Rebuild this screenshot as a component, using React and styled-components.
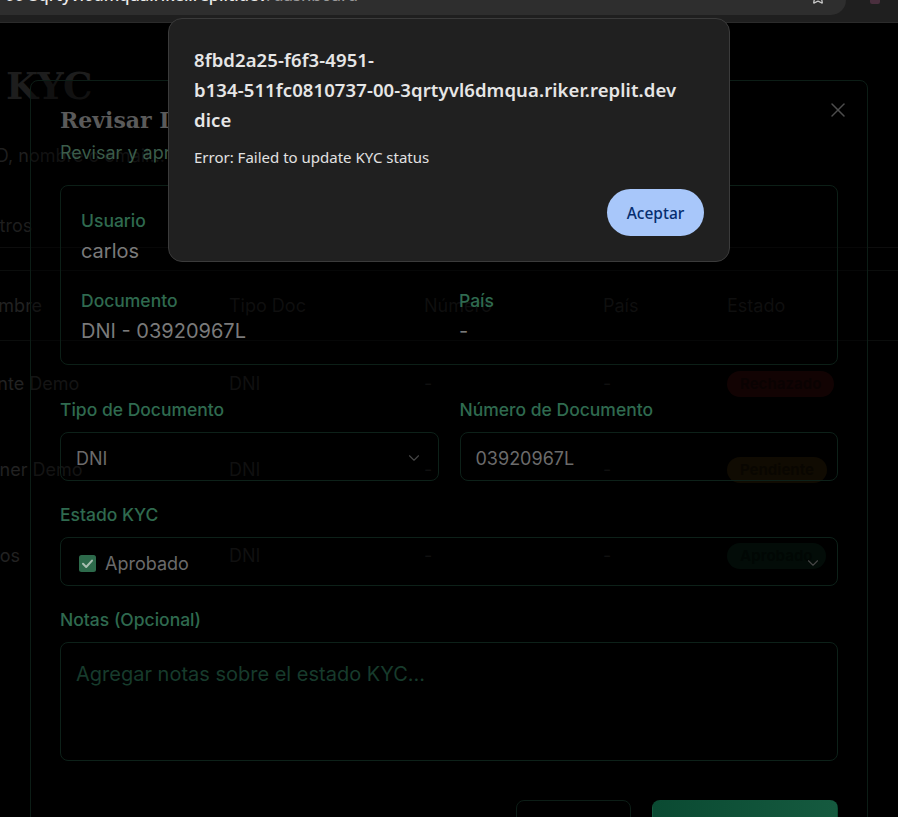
import React from 'react';
import styled, { createGlobalStyle } from 'styled-components';
import { ChevronDown, X, Star } from 'lucide-react';

const GlobalStyle = createGlobalStyle`
  html, body {
    margin: 0;
    padding: 0;
    background: #000;
    overflow: hidden;
  }
  * { box-sizing: border-box; }
  body { font-family: Inter, "Noto Sans", sans-serif; }
`;

// Browser chrome
const Screen = styled.div`
  position: relative;
  width: 898px;
  height: 817px;
  overflow: hidden;
  background: #000;
`;

const BrowserBar = styled.div`
  height: 23px;
  background: #1f1f1f;
  border-bottom: 1px solid #2b2b2b;
  display: flex;
  align-items: flex-start;
  gap: 24px;
`;

const UrlPill = styled.div`
  width: 846px;
  height: 15px;
  background: #2e2e2e;
  border-radius: 0 0 15px 0;
  display: flex;
  justify-content: space-between;
  align-items: flex-start;
  padding: 0 20px 0 5px;
  overflow: hidden;
`;

const UrlText = styled.span`
  margin-top: -16px;
  font-family: "Noto Sans", sans-serif;
  font-size: 16.5px;
  font-weight: 500;
  line-height: 22px;
  color: #ececec;
  white-space: nowrap;
`;

const UrlPath = styled.span`
  color: #9a9a9a;
`;

const StarIcon = styled(Star)`
  margin-top: -11px;
  color: #c8c8c8;
`;

const ExtIcon = styled.span`
  width: 10px;
  height: 4px;
  border-radius: 0 0 2px 2px;
  background: #4a2f3e;
`;

// Page behind the modal
const Viewport = styled.div`
  position: relative;
  height: 794px;
  overflow: hidden;
`;

const BgPage = styled.div`
  margin-left: -26px;
  padding-top: 41px;
  color: #1a1a1a;
  font-size: 18px;
`;

const PageTitle = styled.h1`
  margin: 0 0 0 32px;
  font-family: "DejaVu Serif", serif;
  font-size: 37px;
  line-height: 44px;
  font-weight: 700;
  color: #1d1d1d;
`;

const SearchBar = styled.div`
  margin: 23px 0 0 -81px;
  height: 48px;
  display: flex;
  align-items: center;
  color: #1f1f1f;
  white-space: nowrap;
`;

const FilterRow = styled.div`
  margin: 24px 0 0 6px;
  height: 45px;
  display: flex;
  align-items: center;
  border-bottom: 1px solid #0d0d0d;
  color: #1e1e1e;
`;

const Table = styled.div`
  margin-top: 22px;
  border-top: 1px solid #0b0d0c;
`;

const TableRow = styled.div`
  display: grid;
  grid-template-columns: 255px 195px 179px 124px 1fr;
  align-items: center;
  height: ${p => (p.$head ? '70px' : '86px')};
  border-bottom: 1px solid ${p => (p.$head ? '#0b0d0c' : 'transparent')};
  color: ${p => (p.$head ? '#191919' : '#1b1b1b')};
  white-space: nowrap;
`;

const NameCell = styled.span`
  margin-left: ${p => (p.$head ? '0' : '-9px')};
  color: #222;
`;

const badgeTones = {
  red: ['#1e0606', '#120404'],
  amber: ['#1b1304', '#100b02'],
  green: ['#05150e', '#020c07'],
};

const Badge = styled.span`
  justify-self: start;
  height: 26px;
  padding: 0 13px;
  border-radius: 13px;
  display: inline-flex;
  align-items: center;
  font-size: 15px;
  font-weight: 700;
  background: ${p => badgeTones[p.$tone][0]};
  color: ${p => badgeTones[p.$tone][1]};
`;

// Modal
const Modal = styled.div`
  position: absolute;
  top: 57px;
  left: 30px;
  width: 838px;
  height: 830px;
  border: 1px solid #0c1d16;
  border-radius: 8px;
  padding: 25px 29px;
  background: rgba(0, 0, 0, 0.4);
`;

const CloseButton = styled.button`
  position: absolute;
  top: 17px;
  right: 17px;
  width: 24px;
  height: 24px;
  padding: 0;
  border: none;
  background: none;
  color: #4d4d4d;
  display: flex;
`;

const ModalTitle = styled.h2`
  margin: 0;
  font-family: "DejaVu Serif", serif;
  font-size: 22px;
  line-height: 28px;
  font-weight: 700;
  color: #5a5a5a;
  white-space: nowrap;
`;

const ModalSubtitle = styled.p`
  margin: 7px 0 0;
  font-size: 18px;
  line-height: 24px;
  color: #3b5c4a;
  white-space: nowrap;
`;

const InfoCard = styled.div`
  margin-top: 20px;
  border: 1px solid #0c1f17;
  border-radius: 8px;
  padding: 23px 20px 19px;
  display: grid;
  grid-template-columns: 1fr 1fr;
  gap: 24px 20px;
`;

const Info = styled.div`
  display: flex;
  flex-direction: column;
  gap: 4px;
`;

const Label = styled.span`
  font-size: 17.5px;
  line-height: 24px;
  font-weight: 500;
  color: #2f6a4f;
`;

const Value = styled.span`
  font-size: 20px;
  line-height: 28px;
  color: #7a7a7a;
`;

const FormGrid = styled.div`
  margin-top: 33px;
  display: grid;
  grid-template-columns: 1fr 1fr;
  gap: 22px 21px;
`;

const Field = styled.div`
  display: flex;
  flex-direction: column;
  gap: 10px;
  grid-column: ${p => (p.$full ? '1 / -1' : 'auto')};
`;

const Control = styled.div`
  height: 49px;
  border: 1px solid #0d2119;
  border-radius: 8px;
  padding: 3px 15px 0 15px;
  display: flex;
  align-items: center;
  justify-content: space-between;
  font-size: 18px;
  color: #6b6b6b;
`;

const Chevron = styled(ChevronDown)`
  color: #464646;
`;

const StatusValue = styled.span`
  display: flex;
  align-items: center;
  gap: 9px;
  padding-left: 3px;
`;

const NotesArea = styled.textarea`
  height: 119px;
  resize: none;
  border: 1px solid #0d2119;
  border-radius: 8px;
  padding: 17px 15px;
  background: transparent;
  font-family: Inter, "Noto Sans", sans-serif;
  font-size: 20px;
  line-height: 28px;
  color: #6b6b6b;
  outline: none;

  &::placeholder {
    color: #173b2c;
  }
`;

const Footer = styled.div`
  margin-top: 39px;
  display: flex;
  justify-content: flex-end;
  gap: 21px;
`;

const FooterButton = styled.button`
  width: ${p => (p.$primary ? '186px' : '115px')};
  height: 60px;
  border-radius: 8px;
  border: 1px solid ${p => (p.$primary ? 'transparent' : '#0c1d16')};
  background: ${p => (p.$primary ? 'linear-gradient(90deg, #0a4a32, #155a3f)' : 'transparent')};
  color: ${p => (p.$primary ? '#7d9c8c' : '#555')};
  font-family: Inter, sans-serif;
  font-size: 16px;
  font-weight: 600;
`;

// Browser alert
const AlertBox = styled.div`
  position: absolute;
  top: 18px;
  left: 168px;
  width: 562px;
  background: #202020;
  border: 1px solid #3b3b3b;
  border-radius: 14px;
  padding: 26px 25px 25px;
  font-family: "Noto Sans", sans-serif;
`;

const AlertTitle = styled.div`
  font-size: 18.5px;
  letter-spacing: 0.1px;
  line-height: 30px;
  font-weight: 600;
  color: #e6e6e6;
  white-space: nowrap;
`;

const AlertMessage = styled.div`
  margin-top: 10px;
  font-size: 15px;
  line-height: 24px;
  color: #e2e2e2;
`;

const AlertActions = styled.div`
  margin-top: 20px;
  display: flex;
  justify-content: flex-end;
`;

const AcceptButton = styled.button`
  width: 97px;
  height: 47px;
  border: none;
  border-radius: 24px;
  background: #a8c7fa;
  color: #062e6f;
  font-family: "Noto Sans", sans-serif;
  font-size: 15.5px;
  font-weight: 500;
`;

const CheckIcon = () => (
  <svg width="17" height="17" viewBox="0 0 17 17">
    <rect x="0" y="0" width="17" height="17" rx="2.5" fill="#2d6a4b" />
    <path d="M4 8.8 L7.2 12 L13 5.6" fill="none" stroke="#a9bfb2" strokeWidth="2" strokeLinecap="round" strokeLinejoin="round" />
  </svg>
);

const rows = [
  { name: 'Cliente Demo', status: 'Rechazado', tone: 'red' },
  { name: 'Partner Demo', status: 'Pendiente', tone: 'amber' },
  { name: 'Carlos', status: 'Aprobado', tone: 'green' },
];

const App = () => (
  <Screen>
    <GlobalStyle />
    <BrowserBar>
      <UrlPill>
        <UrlText>
          00-3qrtyvl6dmqua.riker.replit.dev<UrlPath>/dashboard</UrlPath>
        </UrlText>
        <StarIcon size={16} />
      </UrlPill>
      <ExtIcon />
    </BrowserBar>

    <Viewport>
      <BgPage>
        <PageTitle>KYC</PageTitle>
        <SearchBar>Buscar por ID, nombre o email...</SearchBar>
        <FilterRow>Filtros</FilterRow>
        <Table>
          <TableRow $head>
            <NameCell $head>Nombre</NameCell>
            <span>Tipo Doc</span>
            <span>Número</span>
            <span>País</span>
            <span>Estado</span>
          </TableRow>
          {rows.map(r => (
            <TableRow key={r.name}>
              <NameCell>{r.name}</NameCell>
              <span>DNI</span>
              <span>-</span>
              <span>-</span>
              <Badge $tone={r.tone}>{r.status}</Badge>
            </TableRow>
          ))}
        </Table>
      </BgPage>

      <Modal>
        <CloseButton>
          <X size={24} strokeWidth={1.5} />
        </CloseButton>
        <ModalTitle>Revisar Documentación KYC</ModalTitle>
        <ModalSubtitle>Revisar y aprobar la documentación del usuario</ModalSubtitle>

        <InfoCard>
          <Info>
            <Label>Usuario</Label>
            <Value>carlos</Value>
          </Info>
          <Info>
            <Label>Email</Label>
            <Value>carlos@demo.com</Value>
          </Info>
          <Info>
            <Label>Documento</Label>
            <Value>DNI - 03920967L</Value>
          </Info>
          <Info>
            <Label>País</Label>
            <Value>-</Value>
          </Info>
        </InfoCard>

        <FormGrid>
          <Field>
            <Label>Tipo de Documento</Label>
            <Control>
              <span>DNI</span>
              <Chevron size={18} strokeWidth={1.5} />
            </Control>
          </Field>
          <Field>
            <Label>Número de Documento</Label>
            <Control>
              <span>03920967L</span>
            </Control>
          </Field>
          <Field $full>
            <Label>Estado KYC</Label>
            <Control>
              <StatusValue>
                <CheckIcon />
                Aprobado
              </StatusValue>
              <Chevron size={18} strokeWidth={1.5} />
            </Control>
          </Field>
          <Field $full>
            <Label>Notas (Opcional)</Label>
            <NotesArea placeholder="Agregar notas sobre el estado KYC..." />
          </Field>
        </FormGrid>

        <Footer>
          <FooterButton>Cancelar</FooterButton>
          <FooterButton $primary>Guardar Cambios</FooterButton>
        </Footer>
      </Modal>
    </Viewport>

    <AlertBox>
      <AlertTitle>
        8fbd2a25-f6f3-4951-
        <br />
        b134-511fc0810737-00-3qrtyvl6dmqua.riker.replit.dev
        <br />
        dice
      </AlertTitle>
      <AlertMessage>Error: Failed to update KYC status</AlertMessage>
      <AlertActions>
        <AcceptButton>Aceptar</AcceptButton>
      </AlertActions>
    </AlertBox>
  </Screen>
);

export default App;
